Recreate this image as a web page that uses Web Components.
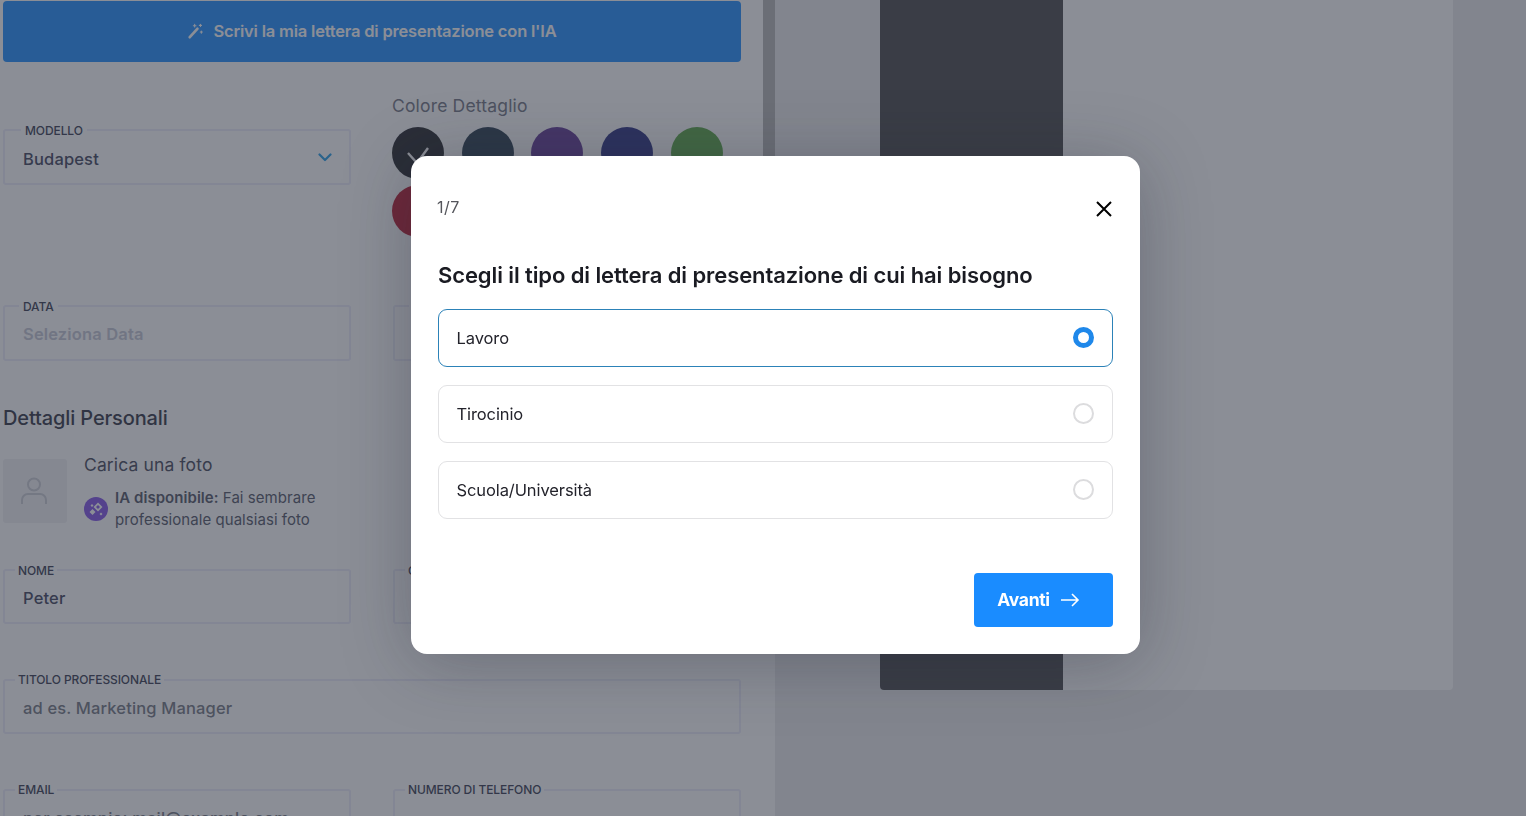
<!DOCTYPE html>
<html lang="it">
<head>
<meta charset="utf-8">
<title>Lettera di presentazione</title>
<style>
html,body{margin:0;height:100%;overflow:hidden;background:#ebebed;font-family:Inter,"Liberation Sans",sans-serif}
</style>
</head>
<body>
<cover-app></cover-app>
<script>
function define(name, html, cls){
  const t=document.createElement('template');t.innerHTML=html;
  customElements.define(name, class extends HTMLElement{
    constructor(){super();this.attachShadow({mode:'open'}).appendChild(t.content.cloneNode(true));}
    connectedCallback(){ if(cls) cls.call(this); }
  });
}
define('form-field',`<style>
:host{display:block;color:#3b4058}
fieldset{margin:0;padding:0 0 0 var(--pad,10px);height:var(--h,61px);box-sizing:border-box;border:2px solid #ececfa;border-radius:3px;min-width:0;display:block;position:relative}
legend{padding:0 var(--lp,3px);margin-left:var(--lm,0px);font:500 12px/var(--ll,14px) Inter,sans-serif;letter-spacing:-.1px;height:14px;color:#33374d}
.v{display:flex;align-items:center;justify-content:space-between;margin-left:var(--vm,8px);height:28px;margin-top:var(--vt,7px);font:500 16.5px/28px Inter,sans-serif;letter-spacing:.15px;white-space:nowrap}
:host([muted]) .v{color:#c3c6d4;font-weight:600}
:host([hint]) .v{color:#71757f}
::slotted(svg){margin:-3px 17px 0 0}
</style><fieldset><legend></legend><div class="v"><span></span><slot></slot></div></fieldset>`,function(){
  this.shadowRoot.querySelector('legend').textContent=this.getAttribute('label')||'';
  this.shadowRoot.querySelector('.v span').textContent=this.getAttribute('value')||'';
});
define('color-swatch',`<style>
:host{display:flex;align-items:center;justify-content:center;width:52px;height:52px;border-radius:50%;background:var(--c)}
</style><slot></slot>`);
define('ai-button',`<style>
:host{display:flex;align-items:center;justify-content:center;gap:10px;height:59px;padding-bottom:2px;margin-top:1px;background:#1a8cff;border-radius:4px;color:#fff;font:600 16.5px/20px Inter,sans-serif;letter-spacing:-.2px}
</style><svg width="16" height="16" viewBox="0 0 18 18" fill="none" stroke="#fff" stroke-linecap="round"><path d="M2 16 10.5 6.5" stroke-width="3"/><path d="M7.5 1.5v3M6 3h3M14 1.500v2.400M12.800 2.700h2.400M15 9v2.400M13.800 10.200h2.400" stroke-width="1.2"/></svg><slot></slot>`);
define('photo-upload',`<style>
:host{display:flex;gap:17px;height:64px}
.box{width:64px;height:64px;border-radius:3px;background:#f1f1f4;display:flex;align-items:center;justify-content:center}
.box svg{margin-left:-2px}
.title{font:400 17.5px/22px Inter,sans-serif;color:#3f4356;letter-spacing:.13px;margin-top:-5px}
.ai{display:flex;align-items:center;gap:7px;margin-top:11px;font:400 15px/22px Inter,sans-serif;color:#4d5163;letter-spacing:.05px}
.badge{flex:none;width:24px;height:24px;border-radius:50%;background:#7f4fe8;display:flex;align-items:center;justify-content:center}
b{font-weight:600}
</style><div class="box"><svg width="32" height="32" viewBox="0 0 32 32" fill="none" stroke="#c9cbd3" stroke-width="2"><circle cx="16" cy="9.5" r="6"/><path d="M4 29v-4a6 6 0 0 1 6-6h12a6 6 0 0 1 6 6v4"/></svg></div>
<div><div class="title">Carica una foto</div><div class="ai"><span class="badge"><svg width="20" height="20" viewBox="0 0 20 20" fill="#fff"><path d="M12 3.500 16.500 8 12 12.500 7.500 8ZM12 6 10 8 12 10 14 8Z" fill-rule="evenodd"/><path d="M6.500 10 9.500 13 6.500 16 3.500 13Z"/><path d="M15 13.500 16.500 15 15 16.500 13.500 15ZM6 5 7.500 6.500 6 8 4.500 6.500Z"/></svg></span><div><b>IA disponibile:</b> Fai sembrare<br>professionale qualsiasi foto</div></div></div>`);
define('editor-form',`<style>
:host{display:block;padding-left:3px;width:738px}
.two{display:grid;grid-template-columns:348px 348px;column-gap:42px}
.r1{margin-top:33px}
.r1 .l{padding-top:28px}
.col{font:400 17.5px/22px Inter,sans-serif;letter-spacing:.17px;color:#6f7381;margin-left:-1px}
.sw{display:flex;flex-wrap:wrap;gap:6px 17.7px;margin:10px 0 0 -1px}
.r2{margin-top:62px}
h2{margin:44px 0 0;font:500 20px/26px Inter,sans-serif;letter-spacing:-.13px;color:#2d3040}
photo-upload{margin-top:28px}
.r3{margin-top:40px}
.r4{margin-top:49px}
.r5{margin-top:49px}
.m{--lm:16px;--lp:4px;--pad:0px;--vm:18px;--ll:16px;--vt:8px;--h:62px}
.d{--lm:14px;--lp:4px;--pad:0px;--vm:18px;--h:62px;--ll:16px}
.n{--ll:16px}
</style>
<ai-button>Scrivi la mia lettera di presentazione con l'IA</ai-button>
<div class="two r1"><div class="l"><form-field class="m" label="MODELLO" value="Budapest"><svg width="14" height="9" viewBox="0 0 14 9" fill="none" stroke="#1f9be6" stroke-width="2.2" stroke-linecap="round" stroke-linejoin="round"><path d="m1.500 1.500 5.500 5.500 5.500-5.500"/></svg></form-field></div>
<div><div class="col">Colore Dettaglio</div><div class="sw">
<color-swatch style="--c:#1f2024"><svg width="24" height="24" viewBox="0 0 24 24" fill="none" stroke="#fff" stroke-width="2.4"><path d="m2 12 9 10L22 7"/></svg></color-swatch>
<color-swatch style="--c:#233748"></color-swatch><color-swatch style="--c:#5d3392"></color-swatch><color-swatch style="--c:#252b7e"></color-swatch><color-swatch style="--c:#56a540"></color-swatch><color-swatch style="--c:#b8142a"></color-swatch></div></div></div>
<div class="two r2"><form-field class="d" label="DATA" value="Seleziona Data" muted></form-field><form-field class="d"></form-field></div>
<h2>Dettagli Personali</h2>
<photo-upload></photo-upload>
<div class="two r3"><form-field class="n" label="NOME" value="Peter"></form-field><form-field class="n" label="COGNOME"></form-field></div>
<div class="r4"><form-field label="TITOLO PROFESSIONALE" value="ad es. Marketing Manager" hint></form-field></div>
<div class="two r5"><form-field label="EMAIL" value="per esempio: mail@example.com" hint></form-field><form-field label="NUMERO DI TELEFONO"></form-field></div>`);
define('letter-preview',`<style>
:host{display:block;padding-left:105px}
.doc{width:573px;height:690px;background:#fff;border-radius:0 0 4px 4px;display:grid;grid-template-columns:183px 1fr;overflow:hidden}
.side{background:#444446}
</style><div class="doc"><div class="side"></div><div></div></div>`);
define('option-row',`<style>
:host{display:flex;align-items:center;justify-content:space-between;box-sizing:border-box;height:58px;padding:0 18px 0 17.5px;border:1px solid #e2e2e4;border-radius:9px;font:400 16.5px/22px Inter,sans-serif;color:#23232b;letter-spacing:-.1px}
:host([selected]){border-color:#2c82b8}
i{display:block;box-sizing:border-box;width:21px;height:21px;border-radius:50%;border:2px solid #dcdcde;margin-bottom:1px}
:host([selected]) i{border:5px solid #1f88ea}
</style><slot></slot><i></i>`);
define('wizard-modal',`<style>
:host{display:block;box-sizing:border-box;width:729px;height:498px;padding:40px 27px 27px;background:#fff;border-radius:16px;box-shadow:0 8px 70px rgba(30,34,50,.3)}
.top{display:flex;justify-content:space-between;align-items:center;height:24px;font:400 16px/22px Inter,sans-serif;color:#55565c;letter-spacing:.5px}
.top span{margin:-2px 0 0 -1px}
.top svg{margin-top:2px}
h1{margin:41px 0 0;font:600 22px/28px Inter,sans-serif;letter-spacing:-.1px;color:#1a1b22;white-space:nowrap}
.opts{display:flex;flex-direction:column;gap:18px;margin-top:20px}
.foot{display:flex;justify-content:flex-end;margin-top:54px}
button{display:flex;align-items:center;justify-content:center;gap:10px;box-sizing:border-box;width:139px;height:54px;border:0;border-radius:4px;background:#1a8cff;color:#fff;font:700 17.5px/20px Inter,sans-serif;letter-spacing:-.3px;padding:0 10px 0 0}
</style><div class="top"><span>1/7</span><svg width="18" height="18" viewBox="0 0 18 18" fill="none" stroke="#000" stroke-width="2"><path d="m2 2 14 14M16 2 2 16"/></svg></div>
<h1>Scegli il tipo di lettera di presentazione di cui hai bisogno</h1>
<div class="opts"><option-row selected>Lavoro</option-row><option-row>Tirocinio</option-row><option-row>Scuola/Università</option-row></div>
<div class="foot"><button>Avanti<svg width="20" height="14" viewBox="0 0 20 14" fill="none" stroke="#fff" stroke-width="1.6"><path d="M1 7h17M12 1l6 6-6 6"/></svg></button></div>`);
define('cover-app',`<style>
:host{display:grid;grid-template-columns:763px 12px 1fr;height:816px;overflow:hidden}
.left{background:#fff;overflow:hidden}
.track{background:#fff}
.thumb{height:560px;background:#b4b4b4}
.right{background:#ebebed;overflow:hidden}
.veil{position:fixed;inset:0;background:rgba(51,56,70,.57);display:flex;align-items:center;justify-content:center;padding:0 0 6px 25px;box-sizing:border-box}
</style><div class="left"><editor-form></editor-form></div><div class="track"><div class="thumb"></div></div><div class="right"><letter-preview></letter-preview></div>
<div class="veil"><wizard-modal></wizard-modal></div>`);
</script>
</body>
</html>
